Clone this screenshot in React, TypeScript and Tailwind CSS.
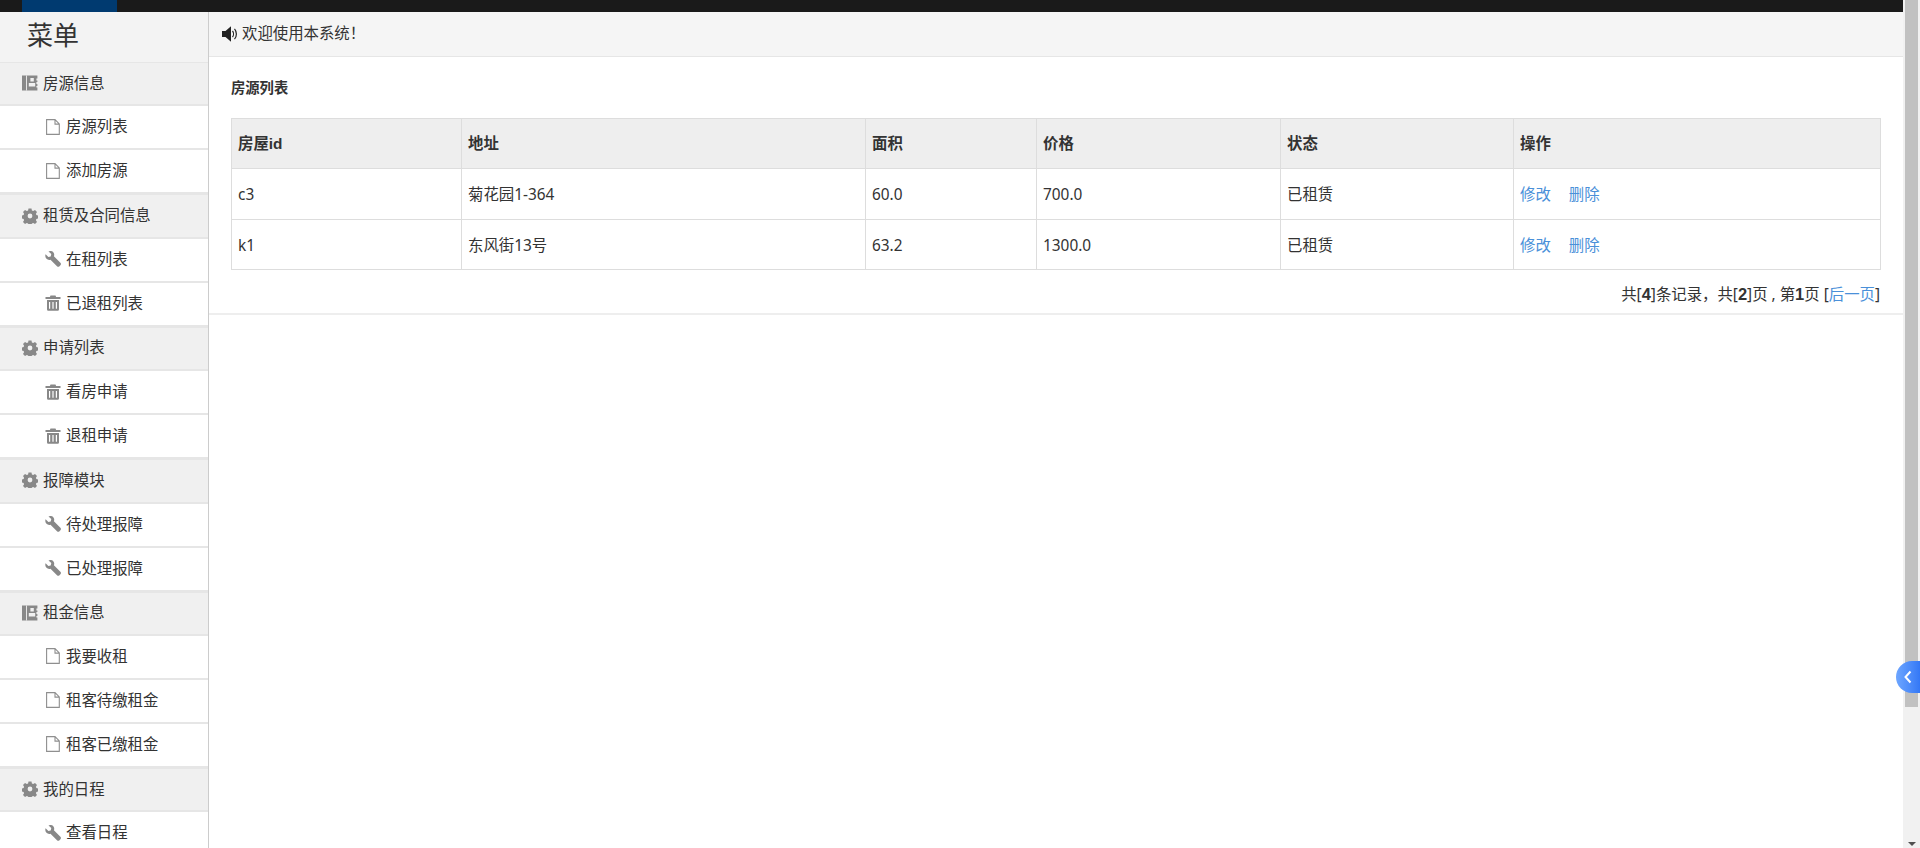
import React from "react";

const FONT = "font-['Noto_Sans','Noto_Sans_CJK_SC',sans-serif]";
const BOLD = "font-['Liberation_Sans','Noto_Sans_CJK_SC',sans-serif] font-bold";
const NUM = "font-['Liberation_Sans',sans-serif] font-bold text-[16.5px]";

type IconName = "book" | "cog" | "file" | "wrench" | "trash";

function Icon({ name }: { name: IconName }) {
  const cls = "block w-4 h-4 shrink-0";
  if (name === "book")
    return (
      <svg viewBox="0 0 16 16" className={cls}>
        <path fill="#888" d="M0 .5h15.400v3h-1v2h1v1.500h-1v2h1V11h-1v1.500h1v3H0z" />
        <path fill="#f0f0f0" d="M4 .5h.9v15H4z" />
        <path fill="#f0f0f0" d="M8.400 3h3.400v3.500H8.400zM6.800 8h6.400v3.600H6.800z" />
      </svg>
    );
  if (name === "cog")
    return (
      <svg viewBox="0 0 16 16" className={cls}>
        <path fill="#888" fillRule="evenodd" d="M6.500 .5h3l.4 2 1.300.6 1.800-1.100 2 2.100-1.100 1.700.5 1.300 2 .4v3l-2 .4-.5 1.300 1.100 1.700-2 2.100-1.800-1.100-1.300.5-.4 2.100h-3l-.4-2.100-1.300-.5-1.800 1.100-2-2.100 1.100-1.700-.5-1.300-2-.4v-3l2-.4.5-1.300-1.100-1.700 2-2.100 1.800 1.100 1.300-.6zM8 5.600a2.400 2.400 0 1 0 0 4.800 2.400 2.400 0 0 0 0-4.800z" />
      </svg>
    );
  if (name === "file")
    return (
      <svg viewBox="0 0 16 16" className={cls}>
        <path fill="#fff" stroke="#8f8f8f" strokeWidth="1.100" d="M1.600 .6h8.400l4.300 4.300v10.500H1.600zM10 .8v4.300h4.200" />
      </svg>
    );
  if (name === "wrench")
    return (
      <svg viewBox="0 0 16 16" className={cls}>
        <path fill="#888" d="M.6 3.200 3.400 6l2.300-.6.600-2.300L3.500.4C5.300-.4 7.300 0 8.300 1.200c1 1.100 1.200 2.700.6 4l6.500 6.600c.7.700.7 1.700 0 2.500l-.9.900c-.8.700-1.800.7-2.500 0L5.500 8.700c-1.400.5-3 .2-4-.9C.3 6.600 0 4.900.6 3.200z" />
      </svg>
    );
  return (
    <svg viewBox="0 0 16 16" className={cls}>
      <path fill="#888" fillRule="evenodd" d="M5.500 .5h5l.6 1.500H15.500v2H.5V2h4.400zM2 5h12v9.200c0 .9-.7 1.600-1.600 1.600H3.600c-.9 0-1.600-.7-1.600-1.600zM5.200 7H4v6.800h1.200zm3.400 0H7.400v6.800h1.200zM12 7h-1.200v6.800H12z" />
    </svg>
  );
}

function Group({ icon, title, items }: { icon: IconName; title: string; items: [IconName, string][] }) {
  return (
    <div>
      <div className="h-[44.4px] flex items-center pl-[22px] pb-px gap-[5px] bg-[#f0f0f0] border-t border-b-2 border-[#e6e6e6]">
        <Icon name={icon} />
        <span>{title}</span>
      </div>
      {items.map(([ic, label]) => (
        <div key={label} className="h-11 flex items-center pl-[45px] pb-px gap-[5px] bg-white border-b-2 border-[#e6e6e6]">
          <Icon name={ic} />
          <span>{label}</span>
        </div>
      ))}
    </div>
  );
}

const rows = [
  ["c3", "菊花园1-364", "60.0", "700.0", "已租赁"],
  ["k1", "东风街13号", "63.2", "1300.0", "已租赁"],
];
const heads = ["房屋id", "地址", "面积", "价格", "状态", "操作"];
const th = "border border-[#dddddd] px-[6px] text-left align-middle";
const td = "border border-[#dddddd] px-[6px] pt-[2px] text-left align-middle font-normal";

export default function App() {
  return (
    <div className={`${FONT} flex h-[848px] w-full overflow-hidden bg-white text-[15.4px] text-[#333]`}>
      <div className="flex-1 min-w-0 flex flex-col">
        <div className="h-3 shrink-0 bg-[#1a1a1a] pl-[22px]">
          <div className="h-full w-[95px] bg-[#003a70]" />
        </div>
        <div className="flex-1 min-h-0 flex">
          <aside className="w-[209px] shrink-0 border-r border-[#cccccc] overflow-hidden">
            <div className="h-[50px] bg-[#f3f3f3] pl-[27px] flex items-center text-[26px] leading-none pb-[5px]">菜单</div>
            <Group icon="book" title="房源信息" items={[["file", "房源列表"], ["file", "添加房源"]]} />
            <Group icon="cog" title="租赁及合同信息" items={[["wrench", "在租列表"], ["trash", "已退租列表"]]} />
            <Group icon="cog" title="申请列表" items={[["trash", "看房申请"], ["trash", "退租申请"]]} />
            <Group icon="cog" title="报障模块" items={[["wrench", "待处理报障"], ["wrench", "已处理报障"]]} />
            <Group icon="book" title="租金信息" items={[["file", "我要收租"], ["file", "租客待缴租金"], ["file", "租客已缴租金"]]} />
            <Group icon="cog" title="我的日程" items={[["wrench", "查看日程"]]} />
          </aside>
          <main className="flex-1 min-w-0">
            <div className="h-[45px] bg-[#f5f5f5] border-b border-[#e6e6e6] pl-[13px] flex items-center gap-[4px]">
              <svg viewBox="0 0 16 16" className="block w-4 h-4 shrink-0">
                <path fill="#222" d="M0 5h3.500L9 .2v15.600L3.500 11H0z" />
                <path fill="none" stroke="#222" strokeWidth="1.200" d="M10.500 5c1.300 1.600 1.300 4.400 0 6M12.500 2.800c2.500 2.800 2.500 7.600 0 10.400" />
              </svg>
              <span>欢迎使用本系统！</span>
            </div>
            <div className="h-[258px] border-b-2 border-[#eeeeee] pl-[22px] pr-[21px] pt-[21px]">
              <div className={`${BOLD} text-[14.3px] leading-[21px] h-[40px]`}>房源列表</div>
              <table className="w-[1649px] table-fixed border-collapse">
                <colgroup>
                  <col className="w-[230px]" />
                  <col className="w-[404px]" />
                  <col className="w-[171px]" />
                  <col className="w-[244px]" />
                  <col className="w-[233px]" />
                  <col className="w-[367px]" />
                </colgroup>
                <thead>
                  <tr className="bg-[#eeeeee] h-[50px]">
                    {heads.map((h) => (
                      <th key={h} className={`${th} ${BOLD}`}>{h}</th>
                    ))}
                  </tr>
                </thead>
                <tbody>
                  {rows.map((r) => (
                    <tr key={r[0]} className="h-[50.5px]">
                      {r.map((c, i) => (
                        <td key={i} className={td}>{c}</td>
                      ))}
                      <td className={`${td} text-[#4a90d9]`}>
                        <span className="mr-[18px]">修改</span>
                        <span>删除</span>
                      </td>
                    </tr>
                  ))}
                </tbody>
              </table>
              <div className="mt-[13px] w-[1650px] pr-px text-right leading-[22px] whitespace-pre">
                共[<b className={NUM}>4</b>]条记录，共[<b className={NUM}>2</b>]页 , 第<b className={NUM}>1</b>页 [<span className="text-[#4a90d9]">后一页</span>]
              </div>
            </div>
          </main>
        </div>
      </div>
      <div className="relative w-[17px] shrink-0 bg-[#f1f1f1] pl-[2px] pr-[2px]">
        <div className="h-[707px] bg-[#c1c1c1]" />
        <div className="absolute bottom-[2px] left-[5px] w-0 h-0 border-x-[4px] border-t-[4px] border-x-transparent border-t-[#505050]" />
        <div className="absolute right-0 top-[661px] h-8 w-6 rounded-l-2xl bg-gradient-to-r from-[#6ea6ff] to-[#3478f6] flex items-center justify-center">
          <svg viewBox="0 0 8 14" className="block w-[8px] h-[14px]">
            <path d="M6.500 1.500 1.500 7l5 5.500" fill="none" stroke="#fff" strokeWidth="2" />
          </svg>
        </div>
      </div>
    </div>
  );
}
